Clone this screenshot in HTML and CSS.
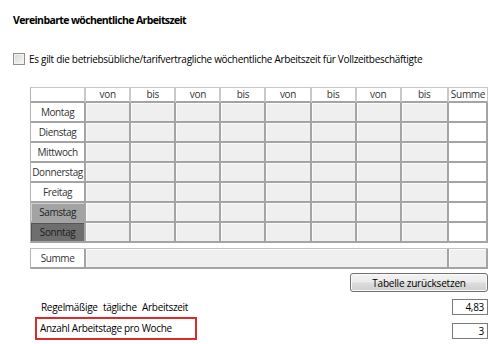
FILE: index.html
```html
<!DOCTYPE html>
<html lang="de">
<head>
  <meta charset="UTF-8">
  <title>Vereinbarte wöchentliche Arbeitszeit</title>
  <link rel="stylesheet" href="styles.css">
</head>
<body>
  <div class="panel">
    <h1 class="title">Vereinbarte wöchentliche Arbeitszeit</h1>

    <!-- Vollzeit checkbox -->
    <label class="check-row">
      <span class="check-box"></span>
      <span>Es gilt die betriebsübliche/tarifvertragliche wöchentliche Arbeitszeit für Vollzeitbeschäftigte</span>
    </label>

    <!-- Week table -->
    <table class="week">
      <colgroup>
        <col class="c-label"><col class="c-time"><col class="c-time"><col class="c-time"><col class="c-time">
        <col class="c-time"><col class="c-time"><col class="c-time"><col class="c-time-last"><col class="c-sum">
      </colgroup>
      <thead>
        <tr>
          <th></th><th>von</th><th>bis</th><th>von</th><th>bis</th>
          <th>von</th><th>bis</th><th>von</th><th>bis</th><th class="sum-head">Summe</th>
        </tr>
      </thead>
      <tbody id="week-body"></tbody>
    </table>

    <table class="week total">
      <colgroup><col class="c-label"><col><col class="c-sum"></colgroup>
      <tr>
        <td class="day">Summe</td>
        <td class="time"></td>
        <td class="time"></td>
      </tr>
    </table>

    <div class="reset-row">
      <button class="reset-btn">Tabelle zurücksetzen</button>
    </div>

    <div class="result-row">
      <span class="result-label spaced">Regelmäßige tägliche Arbeitszeit</span>
      <span class="result-box">4,83</span>
    </div>
    <div class="result-row">
      <span class="result-label marked">Anzahl Arbeitstage pro Woche</span>
      <span class="result-box">3</span>
    </div>
  </div>

  <script>
    const days = [
      { name: "Montag" }, { name: "Dienstag" }, { name: "Mittwoch" },
      { name: "Donnerstag" }, { name: "Freitag" },
      { name: "Samstag", cls: "sat" }, { name: "Sonntag", cls: "sun" }
    ];
    const body = document.getElementById("week-body");
    days.forEach(day => {
      const tr = document.createElement("tr");
      let html = `<td class="day ${day.cls || ""}">${day.name}</td>`;
      for (let i = 0; i < 8; i++) html += `<td class="time"></td>`;
      html += `<td class="sum"></td>`;
      tr.innerHTML = html;
      body.appendChild(tr);
    });
  </script>
</body>
</html>
```

FILE: styles.css
```css
body {
  margin: 0;
  font-family: "Open Sans", "Noto Sans", sans-serif;
  font-size: 10px;
  letter-spacing: -0.3px;
  color: #1a1a1a;
  background: #fff;
}
.panel {
  padding: 12px 10px 0 13px;
}
.title {
  margin: 0;
  font-size: 10.5px;
  font-weight: 700;
  letter-spacing: -0.62px;
  line-height: 16px;
  color: #000;
}
.check-row {
  display: flex;
  align-items: center;
  gap: 4px;
  margin-top: 24px;
  line-height: 14px;
  white-space: nowrap;
  color: #000;
}
.check-box {
  width: 10px;
  height: 10px;
  border: 1px solid #8e8f8f;
  background: linear-gradient(135deg, #d6d6d6, #f7f7f7);
  box-shadow: inset 0 0 0 1px #f2f2f2;
}

/* tables */
.week {
  margin: 21px 0 0 17px;
  width: 458px;
  table-layout: fixed;
  border-collapse: separate;
  border-spacing: 0;
  border-left: 1px solid #b4b4b4;
}
.week thead th {
  height: 13px;
  padding: 0;
  font-weight: 400;
  color: #333;
  background: #fff;
  border-top: 1px solid #c8c8c8;
  border-right: 2px solid #c9c9c9;
  border-bottom: 2px solid #a4a4a4;
  line-height: 13px;
}
.week thead th.sum-head {
  border-right: 1px solid #c8c8c8;
  text-align: left;
  padding-left: 2px;
}
.c-label { width: 55px; }
.c-time { width: 45px; }
.c-time-last { width: 47px; }
.c-sum { width: 39px; }
.week td {
  height: 18px;
  padding: 0;
  border-right: 2px solid #a4a4a4;
  border-bottom: 2px solid #a4a4a4;
  white-space: nowrap;
}
.week td.day {
  text-align: center;
  letter-spacing: -0.4px;
  color: #333;
  background: #fff;
}
.week td.day.sat {
  background: #a3a3a3;
  color: #222;
  box-shadow: inset 1px 1px 0 #d0d0d0;
}
.week td.day.sun {
  background: #6e6e6e;
  color: #1e1e1e;
  box-shadow: inset 1px 1px 0 #555;
}
.week td.time {
  background: #efefef;
  box-shadow: inset 1px 1px 0 #fbfbfb;
}
.week td.sum {
  background: #fff;
}
.week.total {
  margin-top: 5px;
  border-top: 1px solid #c0c0c0;
}

/* reset button */
.reset-row {
  display: flex;
  justify-content: flex-end;
  margin-top: 4px;
}
.reset-btn {
  width: 138px;
  height: 19px;
  padding: 0;
  font-family: inherit;
  font-size: 10px;
  letter-spacing: -0.2px;
  color: #000;
  border: 1px solid #707070;
  border-radius: 3px;
  background: linear-gradient(#f3f3f3 0%, #ebebeb 48%, #dddddd 52%, #cfcfcf 100%);
  box-shadow: inset 0 0 0 1px #fbfbfb;
}

/* result rows */
.result-row {
  display: flex;
  justify-content: space-between;
  align-items: center;
  height: 24px;
  margin-left: 22px;
}
.reset-row + .result-row { margin-top: 3px; }
.result-label {
  line-height: 16px;
  color: #000;
}
.result-label.spaced {
  word-spacing: 3px;
  padding-left: 6px;
}
.result-label.marked {
  width: 155px;
  margin-bottom: 6px;
  padding: 1px 0 2px 3px;
  border: 2px solid #e02a2a;
}
.result-box {
  width: 31px;
  height: 14px;
  line-height: 14px;
  padding-right: 3px;
  text-align: right;
  border: 1px solid #7a7a7a;
  color: #000;
}
```
